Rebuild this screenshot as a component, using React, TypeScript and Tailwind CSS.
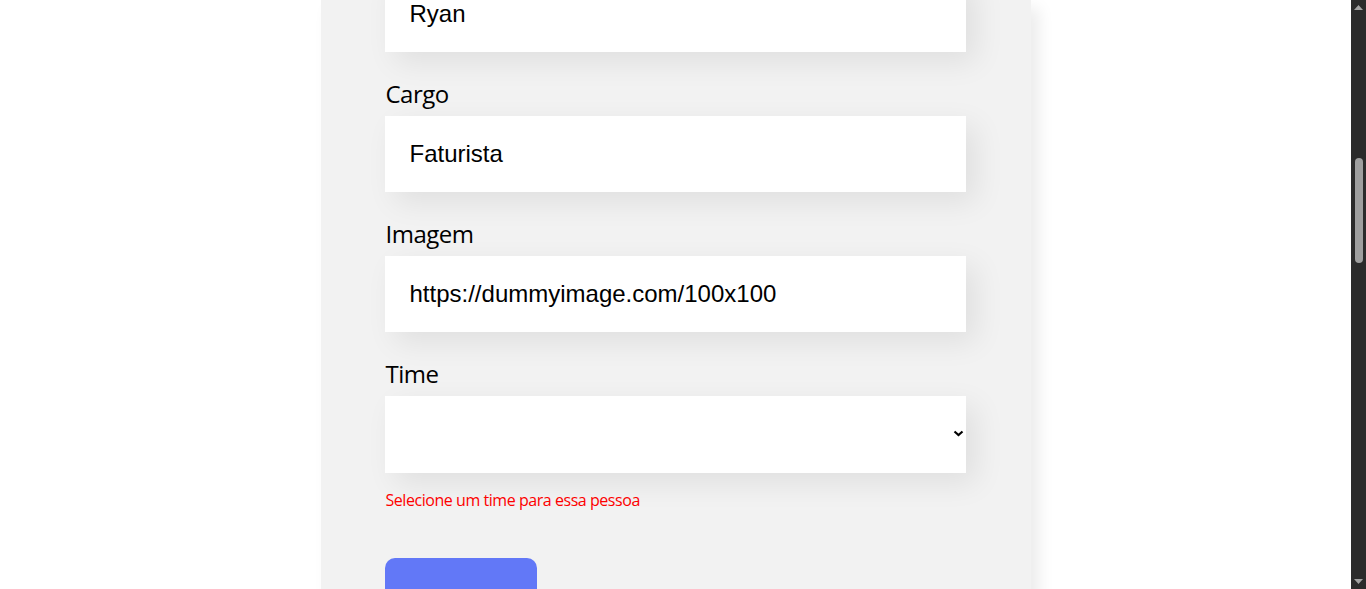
import React from "react"

const fields = [
  { label: "Cargo", value: "Faturista" },
  { label: "Imagem", value: "https://dummyimage.com/100x100" },
]

const labelCls =
  "block mb-2 pl-px pt-[3px] text-[24px] leading-[29px] text-black font-['Open_Sans','Noto_Sans',sans-serif] tracking-[-0.5px]"
const inputCls =
  "block w-full h-[76px] pl-[25px] pr-6 bg-white border-none outline-none text-[24px] text-black font-['Liberation_Sans',Arial,sans-serif] shadow-[10px_10px_30px_rgba(0,0,0,0.08)]"

function Scrollbar() {
  return (
    <div className="w-[15px] h-full bg-[#2b2b2b] flex flex-col items-center shrink-0">
      <div className="h-[15px] w-full flex items-center justify-center">
        <svg width="9" height="5" viewBox="0 0 9 5">
          <polygon points="0,5 4.5,0 9,5" fill="#a3a3a3" />
        </svg>
      </div>
      <div className="mt-[143px] h-[105px] w-[8px] rounded-full bg-[#9f9f9f]" />
      <div className="flex-1" />
      <div className="h-[15px] w-full flex items-center justify-center">
        <svg width="9" height="5" viewBox="0 0 9 5">
          <polygon points="0,0 9,0 4.5,5" fill="#a3a3a3" />
        </svg>
      </div>
    </div>
  )
}

export default function App() {
  return (
    <div className="flex h-[589px] overflow-hidden bg-white">
      <div className="flex-1 flex justify-center overflow-hidden">
        <form className="w-[710px] h-[720px] shrink-0 bg-[#f2f2f2] px-16 rounded-b-[20px] shadow-[8px_8px_16px_rgba(0,0,0,0.08)]">
          {/* Nome (scrolled partly out of view) */}
          <div className="-mt-[24px] mr-px">
            <input className={inputCls} value="Ryan" readOnly />
          </div>

          {fields.map((f) => (
            <div key={f.label} className="mt-6 mr-px">
              <label className={labelCls}>{f.label}</label>
              <input className={inputCls} value={f.value} readOnly />
            </div>
          ))}

          <div className="mt-6 mr-px">
            <label className={labelCls}>Time</label>
            <div className="relative">
              <select className="block w-full h-[77px] px-6 bg-white border-none outline-none appearance-none text-[24px] font-['Liberation_Sans',Arial,sans-serif] shadow-[10px_10px_30px_rgba(0,0,0,0.08)]">
                <option value=""></option>
              </select>
              <svg
                className="absolute right-[2px] top-[34px] pointer-events-none"
                width="11"
                height="7"
                viewBox="0 0 11 7"
              >
                <path d="M1.5 1.5 L5.5 5 L9.5 1.5" stroke="#000" strokeWidth="2.2" fill="none" />
              </svg>
            </div>
            <p className="mt-[17px] pl-px text-[16px] leading-[21px] text-[#ff0000] font-['Open_Sans','Noto_Sans',sans-serif] tracking-[-0.45px]">
              Selecione um time para essa pessoa
            </p>
          </div>

          <button
            type="button"
            className="mt-[47px] bg-[#6278f7] rounded-[10px] px-8 py-8 text-[18px] font-bold text-white font-['Open_Sans','Noto_Sans',sans-serif]"
          >
            Criar card
          </button>
        </form>
      </div>
      <Scrollbar />
    </div>
  )
}
